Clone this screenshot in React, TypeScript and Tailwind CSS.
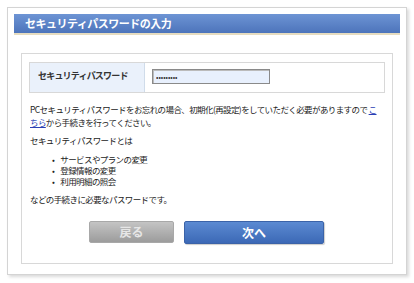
import React from "react";

export default function App() {
  return (
    <div className="w-[414px] h-[283px] bg-white p-[7px] font-['Noto_Sans_CJK_JP','Noto_Sans',sans-serif] text-[#333]">
      <div className="w-[400px] h-[268px] border border-[#d4d4d4] shadow-[2px_2px_3px_rgba(0,0,0,0.15)] px-[6px] pt-[6px]">
        <div className="h-[21px] bg-gradient-to-b from-[#6d94d4] to-[#4d74bb] border-b-2 border-[#e6dcc0] pl-[11px] flex items-center">
          <h1 className="text-[11px] font-bold text-white leading-none tracking-[-0.5px]">セキュリティパスワードの入力</h1>
        </div>
        <div className="mt-[18px] mx-[7px] h-[211px] border border-[#d8d8d8] px-[7px] pt-[8px]">
          <div className="flex h-[31px] border border-[#d8d8d8] text-[9px]">
            <div className="w-[115px] bg-[#eaf1fb] border-r border-[#d0dcea] pl-[8px] pt-[6px] font-bold tracking-[-0.8px]">
              セキュリティパスワード
            </div>
            <div className="flex-1 pl-[7px] pt-[6px]">
              <input
                type="password"
                defaultValue="abcdefghi"
                className="w-[118px] h-[15px] bg-[#e8f0fd] border border-[#8a8a8a] shadow-[inset_1px_1px_0_#bbb] px-[3px] text-[7px] outline-none"
              />
            </div>
          </div>
          <div className="text-[8.5px] leading-[13px] tracking-[-0.6px] pl-[1px] pr-[2px] text-[#222]">
            <p className="mt-[10px]">
              PCセキュリティパスワードをお忘れの場合、初期化(再設定)をしていただく必要がありますので{" "}
              <a href="#" className="text-[#2a3fb5] underline">こちら</a>から手続きを行ってください。
            </p>
            <p className="mt-[5px]">セキュリティパスワードとは</p>
            <ul className="mt-[7px] pl-[22px] leading-[11px]">
              <li className="flex gap-[6px]"><span>•</span>サービスやプランの変更</li>
              <li className="flex gap-[6px]"><span>•</span>登録情報の変更</li>
              <li className="flex gap-[6px]"><span>•</span>利用明細の照会</li>
            </ul>
            <p className="mt-[6px]">などの手続きに必要なパスワードです。</p>
          </div>
          <div className="flex gap-[10px] ml-[60px] mt-[15px]">
            <button className="w-[85px] h-[22px] rounded-[2px] bg-gradient-to-b from-[#c4c4c4] to-[#9c9c9c] border border-[#a8a8a8] text-[12px] font-bold text-[#e6e6e6]">
              戻る
            </button>
            <button className="w-[140px] h-[23px] rounded-[2px] bg-gradient-to-b from-[#5b8ad2] to-[#3c69b6] border border-[#3b63a8] shadow-[1px_1px_1px_rgba(0,0,0,0.2)] text-[12px] font-bold text-white">
              次へ
            </button>
          </div>
        </div>
      </div>
    </div>
  );
}
